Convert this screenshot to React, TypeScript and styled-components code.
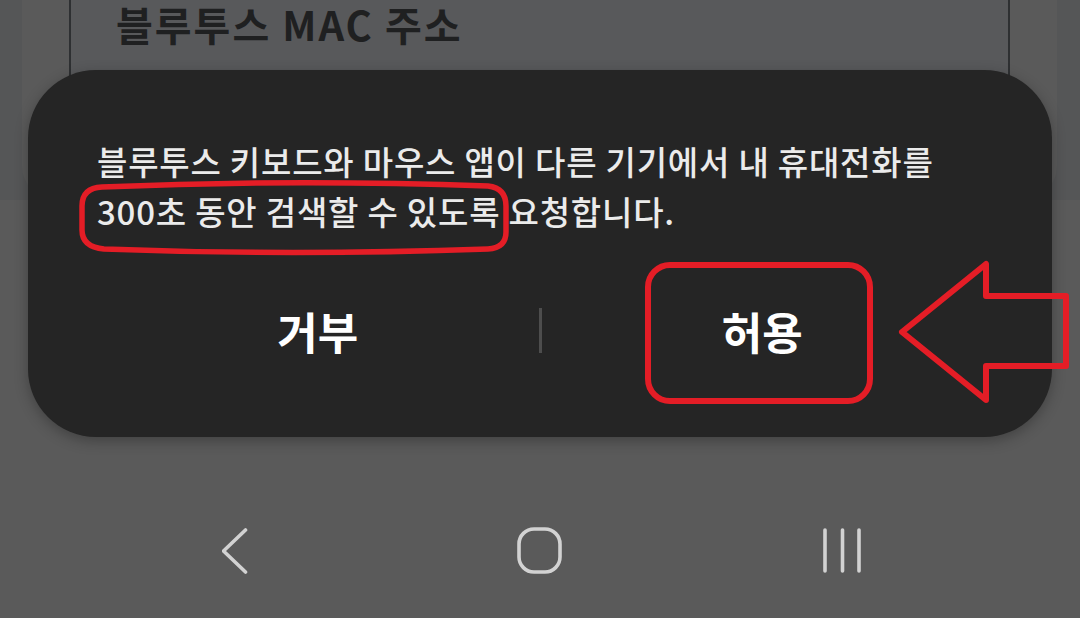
import React from "react";
import styled, { createGlobalStyle } from "styled-components";

const GlobalStyle = createGlobalStyle`
  html, body {
    margin: 0;
    padding: 0;
    background: #5a5a5a;
  }
  * {
    box-sizing: border-box;
  }
`;

const font = `"Noto Sans CJK KR", "Noto Sans", sans-serif`;

const StyledPage = styled.div`
  position: relative;
  width: 1080px;
  height: 618px;
  overflow: hidden;
  background: #5a5a5a;
  display: flex;
  flex-direction: column;
  font-family: ${font};
`;

const StyledUpper = styled.div`
  position: relative;
  height: 484px;
  flex: none;
`;

const StyledBehindArea = styled.div`
  height: 200px;
  background: #555657;
  padding: 0 23px 0 22px;
`;

const StyledBehindCard = styled.div`
  height: 100%;
  background: #5a5a5a;
  border-radius: 0 0 34px 34px;
  padding: 0 47px;
`;

const StyledFieldBox = styled.div`
  height: 100%;
  border: 2px solid #2e3032;
  border-top: none;
  background: #58595b;
  padding: 0 0 0 45px;
`;

const StyledFieldLabel = styled.div`
  font-size: 40px;
  font-weight: 700;
  line-height: 48px;
  color: #1f2021;
  letter-spacing: 2px;
  white-space: nowrap;
`;

const StyledDialog = styled.div`
  position: absolute;
  top: 70px;
  left: 28px;
  width: 1024px;
  height: 367px;
  background: #252525;
  border-radius: 68px;
  box-shadow: 0 4px 14px rgba(0, 0, 0, 0.28);
  padding: 66px 69px 39px;
  display: flex;
  flex-direction: column;
`;

const StyledMessage = styled.p`
  margin: 0;
  font-size: 33px;
  font-weight: 500;
  line-height: 50px;
  letter-spacing: 0.8px;
  color: #ebebeb;
  white-space: nowrap;
`;

const StyledButtonRow = styled.div`
  margin-top: 30px;
  height: 130px;
  display: flex;
  align-items: center;
`;

const StyledButton = styled.div`
  flex: 1;
  height: 100%;
  display: flex;
  align-items: center;
  justify-content: center;
  font-size: 44px;
  font-weight: 700;
  color: #ffffff;
`;

const StyledDivider = styled.div`
  width: 3px;
  height: 45px;
  margin-top: -2px;
  background: #4d4d4d;
`;

const StyledNavBar = styled.div`
  flex: 1;
  display: flex;
  justify-content: center;
  align-items: center;
`;

const StyledNavSlot = styled.div`
  width: 303px;
  display: flex;
  justify-content: center;
  align-items: center;
`;

const StyledAnnotations = styled.svg`
  position: absolute;
  left: 0;
  top: 0;
  pointer-events: none;
`;

const navStroke = "#d2d2d2";

const BackIcon = () => (
  <svg width="30" height="48" viewBox="0 0 30 48">
    <polyline
      points="23.5,3 1.5,24 23.5,45"
      fill="none"
      stroke={navStroke}
      strokeWidth="3.6"
      strokeLinecap="round"
      strokeLinejoin="round"
    />
  </svg>
);

const HomeIcon = () => (
  <svg width="46" height="48" viewBox="0 0 46 48">
    <rect
      x="2"
      y="2"
      width="41"
      height="43"
      rx="15"
      fill="none"
      stroke={navStroke}
      strokeWidth="3.6"
    />
  </svg>
);

const RecentIcon = () => (
  <svg width="42" height="48" viewBox="0 0 42 48">
    {[3, 20.5, 37].map(x => (
      <line
        key={x}
        x1={x}
        y1="3"
        x2={x}
        y2="44"
        stroke={navStroke}
        strokeWidth="3.6"
        strokeLinecap="round"
      />
    ))}
  </svg>
);

const red = "#e41d26";

const Annotations = () => (
  <StyledAnnotations width="1080" height="618" viewBox="0 0 1080 618">
    <path
      d="M 102 187 Q 290 179 488 186 Q 506 188 506 206 L 506 232 Q 506 248 488 249 Q 290 256 104 249 Q 82 247 82 230 L 82 206 Q 82 188 102 187 Z"
      fill="none"
      stroke={red}
      strokeWidth="5.5"
    />
    <rect
      x="648"
      y="265"
      width="222"
      height="136"
      rx="22"
      fill="none"
      stroke={red}
      strokeWidth="6"
    />
    <polygon
      points="902,332 986,264 986,296 1066,296 1066,366 986,366 986,400"
      fill="none"
      stroke={red}
      strokeWidth="6"
      strokeLinejoin="round"
    />
  </StyledAnnotations>
);

const App: React.FC = () => {
  return (
    <>
      <GlobalStyle />
      <StyledPage>
        <StyledUpper>
          <StyledBehindArea>
            <StyledBehindCard>
              <StyledFieldBox>
                <StyledFieldLabel>블루투스 MAC 주소</StyledFieldLabel>
              </StyledFieldBox>
            </StyledBehindCard>
          </StyledBehindArea>
          <StyledDialog>
            <StyledMessage>
              블루투스 키보드와 마우스 앱이 다른 기기에서 내 휴대전화를
              <br />
              300초 동안 검색할 수 있도록 요청합니다.
            </StyledMessage>
            <StyledButtonRow>
              <StyledButton>거부</StyledButton>
              <StyledDivider />
              <StyledButton>허용</StyledButton>
            </StyledButtonRow>
          </StyledDialog>
        </StyledUpper>
        <StyledNavBar>
          <StyledNavSlot>
            <BackIcon />
          </StyledNavSlot>
          <StyledNavSlot>
            <HomeIcon />
          </StyledNavSlot>
          <StyledNavSlot>
            <RecentIcon />
          </StyledNavSlot>
        </StyledNavBar>
        <Annotations />
      </StyledPage>
    </>
  );
};

export default App;
